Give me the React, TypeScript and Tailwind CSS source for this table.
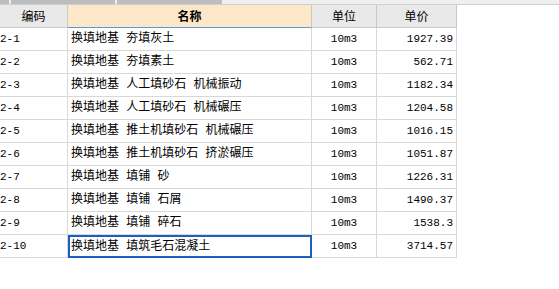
const rows = [
  { code: "2-1", name: "换填地基 夯填灰土", unit: "10m3", price: "1927.39" },
  { code: "2-2", name: "换填地基 夯填素土", unit: "10m3", price: "562.71" },
  { code: "2-3", name: "换填地基 人工填砂石 机械振动", unit: "10m3", price: "1182.34" },
  { code: "2-4", name: "换填地基 人工填砂石 机械碾压", unit: "10m3", price: "1204.58" },
  { code: "2-5", name: "换填地基 推土机填砂石 机械碾压", unit: "10m3", price: "1016.15" },
  { code: "2-6", name: "换填地基 推土机填砂石 挤淤碾压", unit: "10m3", price: "1051.87" },
  { code: "2-7", name: "换填地基 填铺 砂", unit: "10m3", price: "1226.31" },
  { code: "2-8", name: "换填地基 填铺 石屑", unit: "10m3", price: "1490.37" },
  { code: "2-9", name: "换填地基 填铺 碎石", unit: "10m3", price: "1538.3" },
  { code: "2-10", name: "换填地基 填筑毛石混凝土", unit: "10m3", price: "3714.57" },
];

const cjk = "font-['Noto_Sans_CJK_SC',sans-serif]";
const mono = "font-['Liberation_Mono','Noto_Sans_CJK_SC',monospace]";

export default function App() {
  return (
    <div className="w-[559px] h-[289px] bg-white overflow-hidden text-black">
      {/* top scrollbar strip */}
      <div className="flex h-[4px] bg-[#efefef] border-b border-[#d0d0d0] box-content">
        <div className="w-[9px] bg-[#bdbdbd]" />
        <div className="w-[2px]" />
        <div className="w-[104px] bg-[#bdbdbd]" />
        <div className="w-[2px]" />
        <div className="w-[105px] bg-[#bdbdbd]" />
      </div>

      {/* header */}
      <div className={`flex h-[23px] text-[12px] ${cjk}`}>
        <div className="w-[68px] bg-[#e9e9e9] border-r border-b border-[#c8c8c8] flex items-center justify-center">编码</div>
        <div className="w-[244px] bg-[#fde7c9] border-r border-b border-r-[#c8c8c8] border-b-[#5b9bd5] flex items-center justify-center font-bold">名称</div>
        <div className="w-[65px] bg-[#e9e9e9] border-r border-b border-[#c8c8c8] flex items-center justify-center">单位</div>
        <div className="w-[80px] bg-[#e9e9e9] border-r border-b border-[#c8c8c8] flex items-center justify-center">单价</div>
      </div>

      {/* body */}
      {rows.map((r, i) => {
        const selected = i === rows.length - 1;
        return (
          <div key={r.code} className="flex h-[23px]">
            <div className={`w-[68px] border-r border-b border-[#d8d8d8] flex items-center text-[11px] ${mono}`}>{r.code}</div>
            <div
              className={`w-[244px] flex items-center text-[12px] whitespace-pre ${mono} ${
                selected ? "border-2 border-[#1a5fc4] pl-[1px]" : "border-r border-b border-[#d8d8d8] pl-[3px]"
              }`}
            >
              {r.name}
            </div>
            <div className={`w-[65px] border-r border-b border-[#d8d8d8] flex items-center justify-center text-[11px] ${mono}`}>{r.unit}</div>
            <div className={`w-[80px] border-r border-b border-[#d8d8d8] flex items-center justify-end pr-[3px] text-[11px] ${mono}`}>{r.price}</div>
          </div>
        );
      })}
    </div>
  );
}
